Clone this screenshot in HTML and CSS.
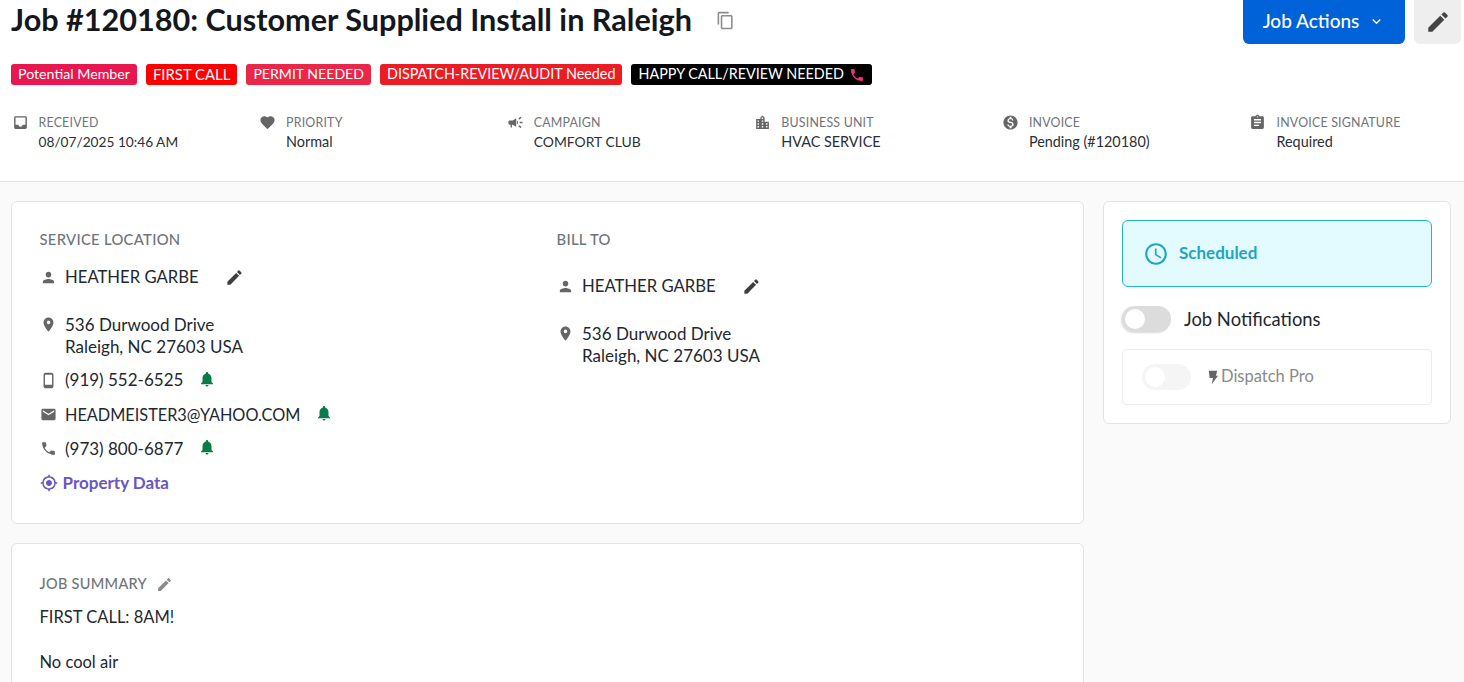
FILE: index.html
```html
<!DOCTYPE html>
<html lang="en">
<head>
<meta charset="utf-8">
<title>Job #120180</title>
<link rel="stylesheet" href="styles.css">
</head>
<body>
<header class="top">
  <div class="title-row">
    <div class="title-wrap">
      <h1 class="title">Job #120180: Customer Supplied Install in Raleigh</h1>
      <svg class="copy" viewBox="0 0 24 24"><path d="M16 1H4c-1.100 0-2 .9-2 2v14h2V3h12V1zm3 4H8c-1.100 0-2 .9-2 2v14c0 1.100.9 2 2 2h11c1.100 0 2-.9 2-2V7c0-1.100-.9-2-2-2zm0 16H8V7h11v14z"/></svg>
    </div>
    <div class="actions">
      <button class="btn-primary">Job Actions <svg class="chev" viewBox="0 0 24 24"><path d="M7.400 8.600 12 13.200l4.600-4.600L18 10l-6 6-6-6z"/></svg></button>
      <button class="btn-edit"><svg class="ic24" viewBox="0 0 24 24"><path d="M3 17.250V21h3.750L17.810 9.940l-3.750-3.750L3 17.250zM20.710 7.040a1 1 0 0 0 0-1.410l-2.340-2.340a1 1 0 0 0-1.410 0l-1.830 1.830 3.750 3.750 1.830-1.830z"/></svg></button>
    </div>
  </div>
  <div class="tags">
    <span class="tag t-pink">Potential Member</span>
    <span class="tag t-red">FIRST CALL</span>
    <span class="tag t-rose">PERMIT NEEDED</span>
    <span class="tag t-scarlet">DISPATCH-REVIEW/AUDIT Needed</span>
    <span class="tag t-black">HAPPY CALL/REVIEW NEEDED <svg class="tag-ic" viewBox="0 0 24 24"><path d="M6.620 10.790c1.440 2.830 3.760 5.140 6.590 6.590l2.200-2.200c.27-.27.67-.36 1.020-.24 1.120.37 2.330.57 3.570.57.550 0 1 .45 1 1V20c0 .550-.45 1-1 1C10.610 21 3 13.390 3 4c0-.55.45-1 1-1h3.500c.55 0 1 .45 1 1 0 1.250.2 2.450.57 3.570.11.350.03.740-.25 1.020l-2.200 2.200z"/></svg></span>
  </div>
  <div class="meta">
    <div class="meta-item">
      <svg class="meta-ic" viewBox="0 0 24 24"><path d="M19 3H5a2 2 0 0 0-2 2v14c0 1.100.9 2 2 2h14a2 2 0 0 0 2-2V5a2 2 0 0 0-2-2zm0 12h-4a3 3 0 0 1-6 0H5V5h14v10z"/></svg>
      <div><div class="meta-label">RECEIVED</div><div class="meta-val meta-date">08/07/2025 10:46 AM</div></div>
    </div>
    <div class="meta-item">
      <svg class="meta-ic" viewBox="0 0 24 24"><path d="m12 21.350-1.450-1.320C5.400 15.360 2 12.280 2 8.500 2 5.420 4.420 3 7.500 3c1.740 0 3.410.81 4.500 2.090C13.090 3.810 14.760 3 16.500 3 19.580 3 22 5.420 22 8.500c0 3.780-3.400 6.860-8.550 11.540L12 21.350z"/></svg>
      <div><div class="meta-label">PRIORITY</div><div class="meta-val">Normal</div></div>
    </div>
    <div class="meta-item">
      <svg class="meta-ic" viewBox="0 0 24 24"><path d="M18 11v2h4v-2h-4zm-2 6.610c.96.710 2.210 1.650 3.200 2.390.4-.53.800-1.070 1.200-1.600-.99-.74-2.240-1.680-3.200-2.400-.4.540-.8 1.080-1.200 1.610zM20.400 5.600c-.4-.53-.8-1.070-1.200-1.600-.99.740-2.240 1.680-3.200 2.400.4.530.8 1.070 1.200 1.600.96-.72 2.210-1.650 3.200-2.400zM4 9c-1.100 0-2 .9-2 2v2c0 1.100.9 2 2 2h1v4h2v-4h1l5 3V6L8 9H4zm11.500 3c0-1.330-.58-2.530-1.500-3.350v6.690c.92-.81 1.500-2.010 1.500-3.340z"/></svg>
      <div><div class="meta-label">CAMPAIGN</div><div class="meta-val meta-caps">COMFORT CLUB</div></div>
    </div>
    <div class="meta-item">
      <svg class="meta-ic" viewBox="0 0 24 24"><path d="M15 11V5l-3-3-3 3v2H3v14h18V11h-6zm-8 8H5v-2h2v2zm0-4H5v-2h2v2zm0-4H5V9h2v2zm6 8h-2v-2h2v2zm0-4h-2v-2h2v2zm0-4h-2V9h2v2zm0-4h-2V5h2v2zm6 12h-2v-2h2v2zm0-4h-2v-2h2v2z"/></svg>
      <div><div class="meta-label">BUSINESS UNIT</div><div class="meta-val">HVAC SERVICE</div></div>
    </div>
    <div class="meta-item">
      <svg class="meta-ic" viewBox="0 0 24 24"><path d="M12 2C6.480 2 2 6.480 2 12s4.480 10 10 10 10-4.480 10-10S17.520 2 12 2zm1.410 16.090V20h-2.670v-1.930c-1.710-.36-3.160-1.460-3.270-3.400h1.960c.1 1.050.82 1.870 2.650 1.870 1.960 0 2.400-.98 2.400-1.590 0-.83-.44-1.610-2.670-2.140-2.480-.6-4.180-1.620-4.180-3.670 0-1.720 1.390-2.840 3.110-3.210V4h2.670v1.950c1.860.45 2.790 1.860 2.850 3.390H14.300c-.05-1.110-.64-1.870-2.220-1.870-1.500 0-2.400.68-2.400 1.640 0 .84.650 1.390 2.670 1.910s4.180 1.390 4.180 3.910c-.01 1.830-1.380 2.830-3.120 3.160z"/></svg>
      <div><div class="meta-label">INVOICE</div><div class="meta-val">Pending (#120180)</div></div>
    </div>
    <div class="meta-item">
      <svg class="meta-ic" viewBox="0 0 24 24"><path d="M19 3h-4.180C14.400 1.840 13.300 1 12 1s-2.400.84-2.820 2H5c-1.100 0-2 .9-2 2v14c0 1.100.9 2 2 2h14c1.100 0 2-.9 2-2V5c0-1.100-.9-2-2-2zm-7 0c.55 0 1 .45 1 1s-.45 1-1 1-1-.45-1-1 .45-1 1-1zm2 14H7v-2h7v2zm3-4H7v-2h10v2zm0-4H7V7h10v2z"/></svg>
      <div><div class="meta-label">INVOICE SIGNATURE</div><div class="meta-val">Required</div></div>
    </div>
  </div>
</header>

<main class="content">
  <div class="main-col">
    <section class="card location-card">
      <div class="loc-col">
        <div class="section-label">SERVICE LOCATION</div>
        <div class="row name-row">
          <svg class="row-ic" viewBox="0 0 24 24"><path d="M12 12c2.210 0 4-1.790 4-4s-1.790-4-4-4-4 1.790-4 4 1.790 4 4 4zm0 2c-2.670 0-8 1.340-8 4v2h16v-2c0-2.660-5.330-4-8-4z"/></svg>
          <span class="name">HEATHER GARBE</span>
          <svg class="pen" viewBox="0 0 24 24"><path d="M3 17.250V21h3.750L17.810 9.940l-3.750-3.750L3 17.250zM20.710 7.040a1 1 0 0 0 0-1.410l-2.340-2.340a1 1 0 0 0-1.410 0l-1.830 1.830 3.750 3.750 1.830-1.830z"/></svg>
        </div>
        <div class="row addr-row">
          <svg class="row-ic" viewBox="0 0 24 24"><path d="M12 2C8.130 2 5 5.130 5 9c0 5.250 7 13 7 13s7-7.750 7-13c0-3.870-3.130-7-7-7zm0 9.500a2.500 2.500 0 0 1 0-5 2.500 2.500 0 0 1 0 5z"/></svg>
          <span>536 Durwood Drive<br>Raleigh, NC 27603 USA</span>
        </div>
        <div class="row contact-row">
          <svg class="row-ic" viewBox="0 0 24 24"><path d="M16 1H8C6.340 1 5 2.340 5 4v16c0 1.660 1.340 3 3 3h8c1.660 0 3-1.340 3-3V4c0-1.660-1.340-3-3-3zm1 17H7V4h10v14z"/></svg>
          <span>(919) 552-6525</span>
          <svg class="bell" viewBox="0 0 24 24"><path d="M12 22c1.100 0 2-.9 2-2h-4c0 1.100.9 2 2 2zm6-6v-5c0-3.070-1.630-5.640-4.500-6.320V4c0-.83-.67-1.500-1.500-1.500s-1.500.67-1.500 1.500v.68C7.640 5.360 6 7.920 6 11v5l-2 2v1h16v-1l-2-2z"/></svg>
        </div>
        <div class="row contact-row email-row">
          <svg class="row-ic" viewBox="0 0 24 24"><path d="M20 4H4c-1.100 0-2 .9-2 2v12c0 1.100.9 2 2 2h16c1.100 0 2-.9 2-2V6c0-1.100-.9-2-2-2zm0 4-8 5-8-5V6l8 5 8-5v2z"/></svg>
          <span>HEADMEISTER3@YAHOO.COM</span>
          <svg class="bell" viewBox="0 0 24 24"><path d="M12 22c1.100 0 2-.9 2-2h-4c0 1.100.9 2 2 2zm6-6v-5c0-3.070-1.630-5.640-4.500-6.320V4c0-.83-.67-1.500-1.500-1.500s-1.500.67-1.500 1.500v.68C7.640 5.360 6 7.920 6 11v5l-2 2v1h16v-1l-2-2z"/></svg>
        </div>
        <div class="row contact-row">
          <svg class="row-ic" viewBox="0 0 24 24"><path d="M6.620 10.790c1.440 2.830 3.760 5.140 6.590 6.590l2.200-2.200c.27-.27.67-.36 1.020-.24 1.120.37 2.330.57 3.570.57.550 0 1 .45 1 1V20c0 .550-.45 1-1 1C10.610 21 3 13.390 3 4c0-.55.45-1 1-1h3.500c.55 0 1 .45 1 1 0 1.250.2 2.450.57 3.570.11.350.03.740-.25 1.020l-2.200 2.200z"/></svg>
          <span>(973) 800-6877</span>
          <svg class="bell" viewBox="0 0 24 24"><path d="M12 22c1.100 0 2-.9 2-2h-4c0 1.100.9 2 2 2zm6-6v-5c0-3.070-1.630-5.640-4.500-6.320V4c0-.83-.67-1.500-1.500-1.500s-1.500.67-1.500 1.500v.68C7.640 5.360 6 7.920 6 11v5l-2 2v1h16v-1l-2-2z"/></svg>
        </div>
        <div class="row property-row">
          <svg class="prop-ic" viewBox="0 0 24 24"><path d="M12 8c-2.210 0-4 1.790-4 4s1.790 4 4 4 4-1.790 4-4-1.790-4-4-4zm8.940 3A8.994 8.994 0 0 0 13 3.060V1h-2v2.060A8.994 8.994 0 0 0 3.060 11H1v2h2.060A8.994 8.994 0 0 0 11 20.940V23h2v-2.060A8.994 8.994 0 0 0 20.940 13H23v-2h-2.060zM12 19c-3.870 0-7-3.130-7-7s3.130-7 7-7 7 3.130 7 7-3.130 7-7 7z"/></svg>
          <span>Property Data</span>
        </div>
      </div>
      <div class="loc-col">
        <div class="section-label">BILL TO</div>
        <div class="row name-row bill-name">
          <svg class="row-ic" viewBox="0 0 24 24"><path d="M12 12c2.210 0 4-1.790 4-4s-1.790-4-4-4-4 1.790-4 4 1.790 4 4 4zm0 2c-2.670 0-8 1.340-8 4v2h16v-2c0-2.660-5.330-4-8-4z"/></svg>
          <span class="name">HEATHER GARBE</span>
          <svg class="pen" viewBox="0 0 24 24"><path d="M3 17.250V21h3.750L17.810 9.940l-3.750-3.750L3 17.250zM20.710 7.040a1 1 0 0 0 0-1.410l-2.340-2.340a1 1 0 0 0-1.410 0l-1.830 1.830 3.750 3.750 1.830-1.830z"/></svg>
        </div>
        <div class="row addr-row">
          <svg class="row-ic" viewBox="0 0 24 24"><path d="M12 2C8.130 2 5 5.130 5 9c0 5.250 7 13 7 13s7-7.750 7-13c0-3.870-3.130-7-7-7zm0 9.500a2.500 2.500 0 0 1 0-5 2.500 2.500 0 0 1 0 5z"/></svg>
          <span>536 Durwood Drive<br>Raleigh, NC 27603 USA</span>
        </div>
      </div>
    </section>
    <section class="card summary-card">
      <div class="summary-label">JOB SUMMARY <svg class="pen-sm" viewBox="0 0 24 24"><path d="M3 17.250V21h3.750L17.810 9.940l-3.750-3.750L3 17.250zM20.710 7.040a1 1 0 0 0 0-1.410l-2.340-2.340a1 1 0 0 0-1.410 0l-1.830 1.830 3.750 3.750 1.830-1.830z"/></svg></div>
      <p class="summary-text">FIRST CALL: 8AM!</p>
      <p class="summary-text">No cool air</p>
    </section>
  </div>
  <aside class="card side-card">
    <div class="status">
      <svg class="status-ic" viewBox="0 0 24 24"><path d="M11.990 2C6.470 2 2 6.480 2 12s4.470 10 9.990 10C17.520 22 22 17.520 22 12S17.520 2 11.990 2zM12 20c-4.420 0-8-3.580-8-8s3.580-8 8-8 8 3.580 8 8-3.580 8-8 8zm.5-13H11v6l5.250 3.150.75-1.230-4.500-2.670V7z"/></svg>
      <span>Scheduled</span>
    </div>
    <div class="toggle-row">
      <span class="switch"><span class="knob"></span></span>
      <span class="toggle-text">Job Notifications</span>
    </div>
    <div class="dispatch">
      <span class="switch switch-off"><span class="knob"></span></span>
      <span class="dispatch-text"><svg class="bolt" viewBox="0 0 12 18"><path d="M1 1h10L9.500 7H12L4.500 17 6 9.500H2z"/></svg>Dispatch Pro</span>
    </div>
  </aside>
</main>
</body>
</html>
```
FILE: styles.css
```css
* { box-sizing: border-box; }
html, body { margin: 0; height: 682px; overflow: hidden; }
body { background: #fafafa; font-family: "Lato", "Noto Sans", sans-serif; color: #1f2430; font-size: 16px; }
svg { fill: currentColor; display: block; flex: none; }

.top { background: #fff; border-bottom: 1px solid #e2e2e2; height: 182px; padding: 0 3px 0 11px; }
.title-row { display: flex; justify-content: space-between; align-items: flex-start; height: 64px; }
.title-wrap { display: flex; align-items: center; height: 40px; }
.title { margin: 0; font-size: 30.600px; font-weight: 700; color: #14171c; line-height: 40px; }
.copy { width: 19px; height: 19px; margin-left: 24px; color: #8c8c8c; }
.actions { display: flex; gap: 9px; }
.btn-primary { width: 162px; height: 44px; background: #0062d9; color: #fff; border: 0; border-radius: 0 0 6px 6px; font: 500 19px "Lato", sans-serif; display: flex; align-items: center; justify-content: center; gap: 9px; padding: 0 0 3px; }
.chev { width: 17px; height: 17px; margin-top: 2px; }
.btn-edit { width: 47px; height: 44px; background: #eeeeee; border: 0; border-radius: 0 0 6px 6px; color: #444; display: flex; align-items: center; justify-content: center; padding: 0; }
.ic24 { width: 26px; height: 26px; }

.tags { display: flex; gap: 9px; height: 21px; }
.tag { display: inline-flex; align-items: center; gap: 5px; height: 21px; padding: 0 7px 2px; border-radius: 3px; color: #fff; font-size: 14.300px; white-space: nowrap; }
.t-pink { background: #e8174f; font-size: 14.200px; }
.t-red { background: #ff0000; font-size: 14.900px; }
.t-rose { background: #ea2748; font-size: 14.100px; }
.t-scarlet { background: #ec1c24; font-size: 14.350px; }
.t-black { background: #000; font-size: 14.350px; }
.tag-ic { width: 16px; height: 16px; color: #f0307a; margin-top: 2px; }

.meta { display: grid; grid-template-columns: repeat(6, 247.600px); margin-top: 29px; }
.meta-item { display: flex; gap: 10px; }
.meta-ic { width: 17px; height: 17px; color: #666; margin-left: .5px; }
.meta-label { font-size: 12.400px; line-height: 17px; color: #6f7479; letter-spacing: .2px; }
.meta-val { font-size: 14.400px; line-height: 22px; color: #2a2f38; }
.meta-date { font-size: 13.700px; }
.meta-caps { font-size: 13.900px; }

.content { display: flex; gap: 19px; padding: 19px 13px 0 11px; align-items: flex-start; }
.main-col { width: 1073px; flex: none; display: flex; flex-direction: column; gap: 19px; }
.card { background: #fff; border: 1px solid #e3e3e3; border-radius: 6px; }
.location-card { height: 323px; display: grid; grid-template-columns: 517px 1fr; padding: 27px 28px 0 27.500px; }
.section-label { font-size: 14.800px; line-height: 20px; color: #6f7479; letter-spacing: .3px; font-weight: 500; }
.row { display: flex; align-items: center; font-size: 17px; line-height: 22px; color: #23272f; }
.row-ic { width: 17px; height: 17px; color: #666; margin-right: 8.500px; }
.name-row { margin-top: 17px; height: 22px; font-size: 16.700px; }
.bill-name { margin-top: 26px; }
.pen { width: 19px; height: 19px; color: #3e3e3e; margin-left: 26px; }
.addr-row { margin-top: 26px; align-items: flex-start; height: 43px; }
.addr-row .row-ic { margin-top: 2px; }
.contact-row { margin-top: 12.300px; height: 22px; }
.email-row { font-size: 16.300px; }
.bell { width: 18px; height: 18px; color: #0a7a4b; margin-left: 14.500px; margin-top: -3px; }
.property-row { margin-top: 12px; color: #6a55c4; font-weight: 700; }
.prop-ic { width: 18px; height: 18px; margin-right: 5px; }

.summary-card { height: 260px; padding: 31px 28px 0 27.500px; }
.summary-label { display: flex; align-items: center; gap: 9px; font-size: 14.500px; line-height: 18px; color: #6f7479; letter-spacing: .3px; font-weight: 500; }
.pen-sm { width: 17px; height: 17px; color: #8a8a8a; }
.summary-text { margin: 13px 0 0; font-size: 16.500px; line-height: 22px; color: #23272f; }
.summary-text + .summary-text { margin-top: 23px; }

.side-card { width: 348px; height: 223px; padding: 18px 18px 0; flex: none; }
.status { height: 67px; display: flex; align-items: center; gap: 10px; padding: 0 0 2px 20px; background: #e3fbfe; border: 1px solid #22b5d0; border-radius: 6px; color: #1ea5c2; font-weight: 700; font-size: 17px; }
.status-ic { width: 26px; height: 26px; margin-top: 2px; }
.toggle-row { display: flex; align-items: center; gap: 13px; margin-top: 19px; height: 26px; }
.toggle-text { font-size: 18.400px; color: #23272f; }
.switch { width: 49px; height: 26px; border-radius: 13px; background: #dcdcdc; display: flex; align-items: center; padding-left: 3px; box-shadow: -1px 1px 2px rgba(0,0,0,.15); }
.knob { width: 20px; height: 20px; border-radius: 50%; background: #fff; }
.dispatch { display: flex; align-items: center; gap: 17px; height: 56px; margin-top: 17px; padding-left: 19px; border: 1px solid #ececec; border-radius: 4px; }
.switch-off { background: #f5f5f5; box-shadow: none; }
.dispatch-text { display: flex; align-items: center; font-size: 16.500px; color: #8a8a8a; gap: 3px; margin-top: -2px; }
.bolt { width: 10px; height: 15px; color: #666; margin-top: 3px; }
```
